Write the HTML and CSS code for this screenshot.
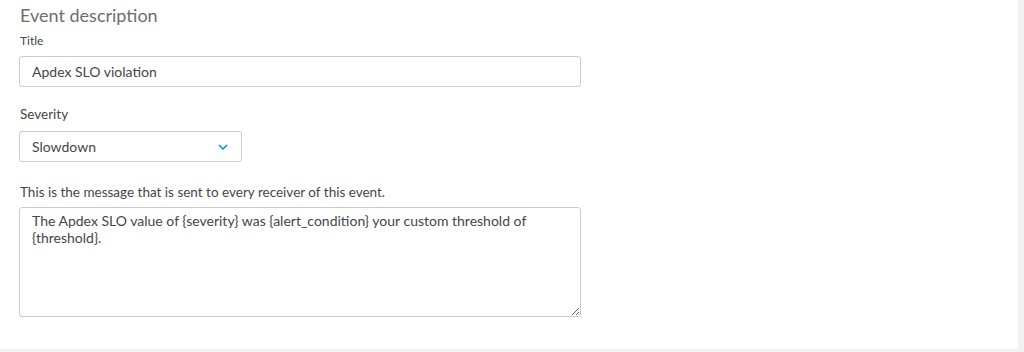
FILE: index.html
```html
<!DOCTYPE html>
<html lang="en">

<head>
    <meta charset="UTF-8">
    <title>Event description</title>
    <link rel="stylesheet" href="styles.css">
</head>

<body>
    <div class="panel">
        <h2 class="panel-title">Event description</h2>

        <label class="small-label" for="title">Title</label>
        <input class="text-input title-input" id="title" type="text" value="Apdex SLO violation">

        <label class="field-label" for="severity">Severity</label>
        <div class="select">
            <span>Slowdown</span>
            <svg class="chevron" width="10" height="6" viewBox="0 0 10 6">
                <path d="M1 1l4 4 4-4" fill="none" stroke="#00a1b2" stroke-width="1.6"/>
            </svg>
        </div>

        <label class="field-label msg-label" for="message">This is the message that is sent to every receiver of this event.</label>
        <textarea class="text-input message" id="message">The Apdex SLO value of {severity} was {alert_condition} your custom threshold of {threshold}.</textarea>
    </div>
</body>

</html>
```

FILE: styles.css
```css
body {
    background: #f2f2f2;
    margin: 0;
    padding: 0;
    font-family: Lato, 'Open Sans', sans-serif;
    color: #454646;
}

.panel {
    background: #ffffff;
    width: 1018px;
    height: 349px;
    box-sizing: border-box;
    padding: 3px 20px 0 19px;
    display: flex;
    flex-direction: column;
    align-items: flex-start;
}

.panel-title {
    margin: 0 0 0 1px;
    font-size: 18px;
    font-weight: normal;
    color: #6d6d6d;
    line-height: 24px;
}

.small-label {
    font-size: 12px;
    line-height: 16px;
    margin: 6px 0 0 1px;
}

.field-label {
    font-size: 13.5px;
    line-height: 18px;
    margin: 18px 0 0 1px;
}

.text-input {
    font-family: Lato, 'Open Sans', sans-serif;
    font-size: 14px;
    color: #454646;
    border: 1px solid #cccccc;
    border-radius: 3px;
    box-sizing: border-box;
    outline: none;
}

.title-input {
    width: 562px;
    height: 31px;
    margin-top: 7px;
    padding: 0 12px;
}

.select {
    width: 223px;
    height: 31px;
    margin-top: 8px;
    box-sizing: border-box;
    border: 1px solid #cccccc;
    border-radius: 3px;
    padding: 0 13px 0 12px;
    display: flex;
    align-items: center;
    justify-content: space-between;
    font-size: 14px;
}

.msg-label {
    margin-top: 21px;
}

.message {
    width: 562px;
    height: 110px;
    margin-top: 6px;
    padding: 4px 12px;
    line-height: 17px;
    resize: vertical;
}
```
